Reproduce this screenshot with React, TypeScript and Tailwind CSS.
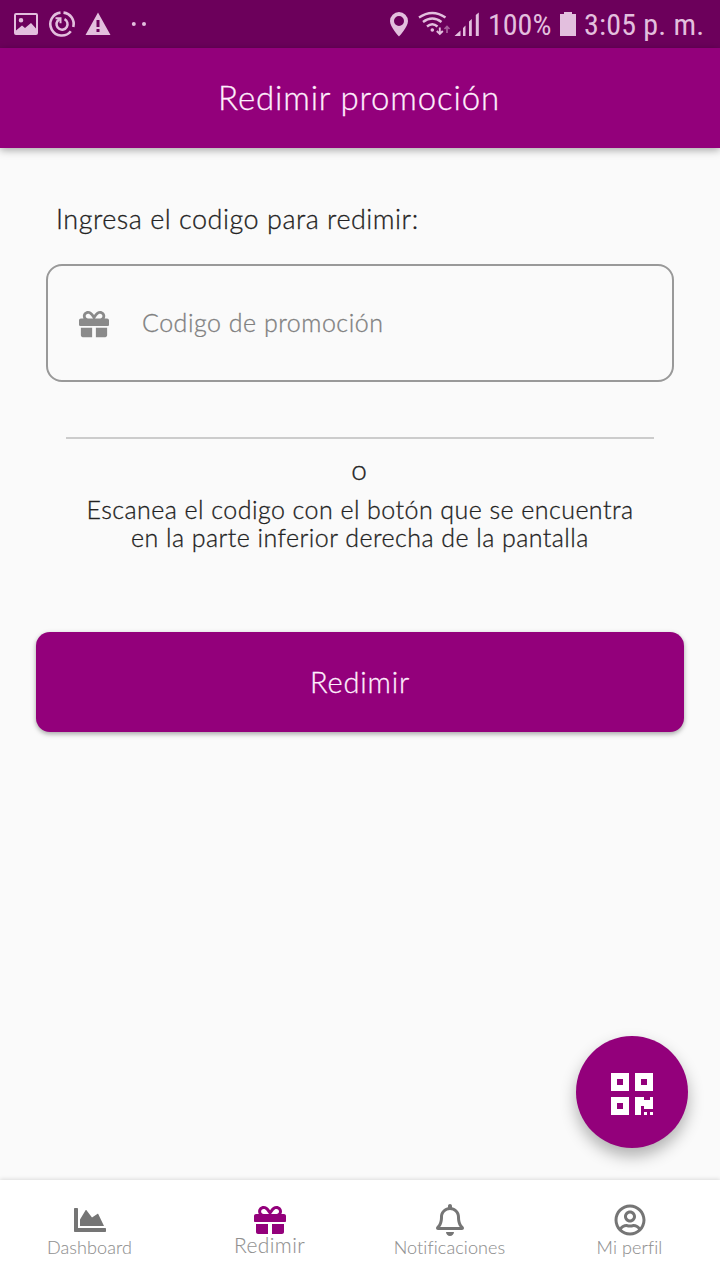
import type { ReactNode } from 'react';
import { FaChartArea, FaGift, FaQrcode, FaRegBell, FaRegUserCircle } from 'react-icons/fa';

function StatusBar() {
  return (
    <div className="h-12 shrink-0 flex items-center justify-between bg-[#6c005b] text-[#e3bfde] pl-3.5 pr-4">
      {/* Notifications */}
      <svg width="136" height="48" viewBox="14 0 136 48" fill="currentColor">
        <path
          fillRule="evenodd"
          d="M16 13h20a2 2 0 0 1 2 2v18a2 2 0 0 1-2 2H16a2 2 0 0 1-2-2V15a2 2 0 0 1 2-2Zm0 2v15.500l6-5 3 2.500 6-5 5 5.500V15H16Zm5 3a2.300 2.300 0 1 1 0 4.600a2.300 2.300 0 0 1 0-4.600Z"
        />
        <g fill="none" stroke="currentColor" strokeWidth="2.600">
          <path d="M60.500 12.600A11.500 11.500 0 1 0 70.800 31.200" />
          <path d="M63.500 12.600A11.500 11.500 0 0 1 73.300 27" />
          <path d="M64.500 19.200A5.500 5.500 0 1 1 57.500 21L59.500 19" strokeWidth="2.500" />
          <path d="M55.500 18.300h5v5" strokeWidth="2" />
        </g>
        <path fillRule="evenodd" d="M98 12.500 110.500 35H85.500ZM96.500 20v7h3v-7Zm0 9v3h3v-3Z" />
        <circle cx="133.800" cy="24" r="2" />
        <circle cx="144" cy="24" r="2" />
      </svg>

      {/* Connectivity, battery and clock */}
      <div className="flex items-center font-['Roboto_Condensed',Roboto,sans-serif] font-normal text-[30px] leading-none [-webkit-text-stroke:0]">
        <svg width="92" height="48" viewBox="390 0 92 48" fill="currentColor">
          <path
            fillRule="evenodd"
            d="M399 12a9 9 0 0 1 9 9c0 6-9 15.500-9 15.500S390 27 390 21a9 9 0 0 1 9-9Zm0 4a5 5 0 1 0 0 10a5 5 0 0 0 0-10Z"
          />
          <g fill="none" stroke="currentColor" strokeWidth="2.400">
            <path d="M419 17.500Q432.300 8.500 445.500 17.500" />
            <path d="M423 22Q432.300 15 441.500 22" />
            <path d="M427 26.500Q432.300 22 437.500 26.500" />
            <path d="M439.800 27.500v6.500M436.800 31l3 3 3-3" strokeWidth="1.900" />
            <path d="M447 33v-6M444.500 29l2.500-2.500 2.500 2.500" strokeWidth="1.700" opacity="0.5" />
          </g>
          <circle cx="432.300" cy="30" r="1.800" />
          <path d="M454.500 36l6-5.500v5.500ZM463 28l2.500-2.500V36H463ZM469 21.500l2.800-2.500v17H469ZM475.800 15l3-2.500V36h-3Z" />
        </svg>
        <span className="w-[64px] ml-1.5 pt-0.5 whitespace-nowrap">100%</span>
        <svg className="ml-2" width="16" height="24" viewBox="0 0 16 24" fill="currentColor">
          <path d="M4 0h8v2h4v22H0V2h4Z" />
        </svg>
        <span className="w-[120px] ml-2 pt-0.5 whitespace-nowrap tracking-[0.2px]">3:05 p. m.</span>
      </div>
    </div>
  );
}

function Header() {
  return (
    <header className="relative z-10 h-[100px] shrink-0 flex items-center justify-center bg-[#93007b] shadow-[0_2px_8px_rgba(0,0,0,0.35)]">
      <h1 className="pr-0.5 pb-px text-[33px] font-light text-[#fff0fd] tracking-[0.85px]">Redimir promoción</h1>
    </header>
  );
}

interface NavItemProps {
  icon: ReactNode;
  label: string;
  active?: boolean;
}

function NavItem({ icon, label, active }: NavItemProps) {
  return (
    <button className="flex-1 flex flex-col items-center pt-6">
      <span className={active ? 'h-8 text-[#93007b]' : 'h-8 text-[#757575]'}>{icon}</span>
      <span
        className={
          active
            ? 'text-[21px] leading-6 -mt-[3px] pr-px tracking-[0.4px] text-[#909090]'
            : 'text-[18px] leading-6 -mt-px pr-px tracking-[0.1px] text-[#909090]'
        }
      >
        {label}
      </span>
    </button>
  );
}

function BottomNav() {
  return (
    <nav className="h-[100px] shrink-0 flex bg-white shadow-[0_-1px_4px_rgba(0,0,0,0.12)] [-webkit-text-stroke:0.1px]">
      <NavItem icon={<FaChartArea size={32} />} label="Dashboard" />
      <NavItem icon={<FaGift size={32} />} label="Redimir" active />
      <NavItem icon={<FaRegBell size={32} />} label="Notificaciones" />
      <NavItem icon={<FaRegUserCircle size={32} />} label="Mi perfil" />
    </nav>
  );
}

export default function App() {
  return (
    <div className="relative w-[720px] h-[1280px] flex flex-col bg-[#fafafa] font-[Lato,sans-serif] font-light text-[#222] overflow-hidden [-webkit-text-stroke:0.3px]">
      <StatusBar />
      <Header />

      <main className="flex-1 flex flex-col px-9 pt-[55px]">
        <label className="ml-5 text-[27px] leading-8 tracking-[0.5px]">Ingresa el codigo para redimir:</label>

        <div className="mt-[29px] mx-2.5 h-[118px] flex items-center rounded-2xl border-2 border-[#999] px-[31px]">
          <FaGift size={30} className="mt-px text-[#8a8a8a]" />
          <input
            className="ml-[33px] flex-1 bg-transparent outline-none text-[25px] font-light tracking-[0.5px] placeholder:text-[#808080]"
            placeholder="Codigo de promoción"
          />
        </div>

        <hr className="mt-[55px] mx-[30px] border-t-2 border-[#ccc]" />

        <p className="mt-3.5 pr-0.5 text-center text-[28px] leading-8">o</p>
        <p className="mt-2.5 text-center text-[25px] leading-7 tracking-[0.45px]">
          Escanea el codigo con el botón que se encuentra
          <br />
          en la parte inferior derecha de la pantalla
        </p>

        <button className="mt-[81px] h-[100px] rounded-[14px] bg-[#93007b] text-[29px] tracking-[0.8px] text-[#fff0fd] shadow-[0_2px_5px_rgba(0,0,0,0.35)]">
          Redimir
        </button>
      </main>

      {/* Scan button floats over the page */}
      <button className="absolute right-8 bottom-[132px] size-28 flex items-center justify-center pt-1 rounded-full bg-[#93007b] text-white shadow-[0_8px_16px_rgba(0,0,0,0.3)]">
        <FaQrcode size={48} />
      </button>

      <BottomNav />
    </div>
  );
}
